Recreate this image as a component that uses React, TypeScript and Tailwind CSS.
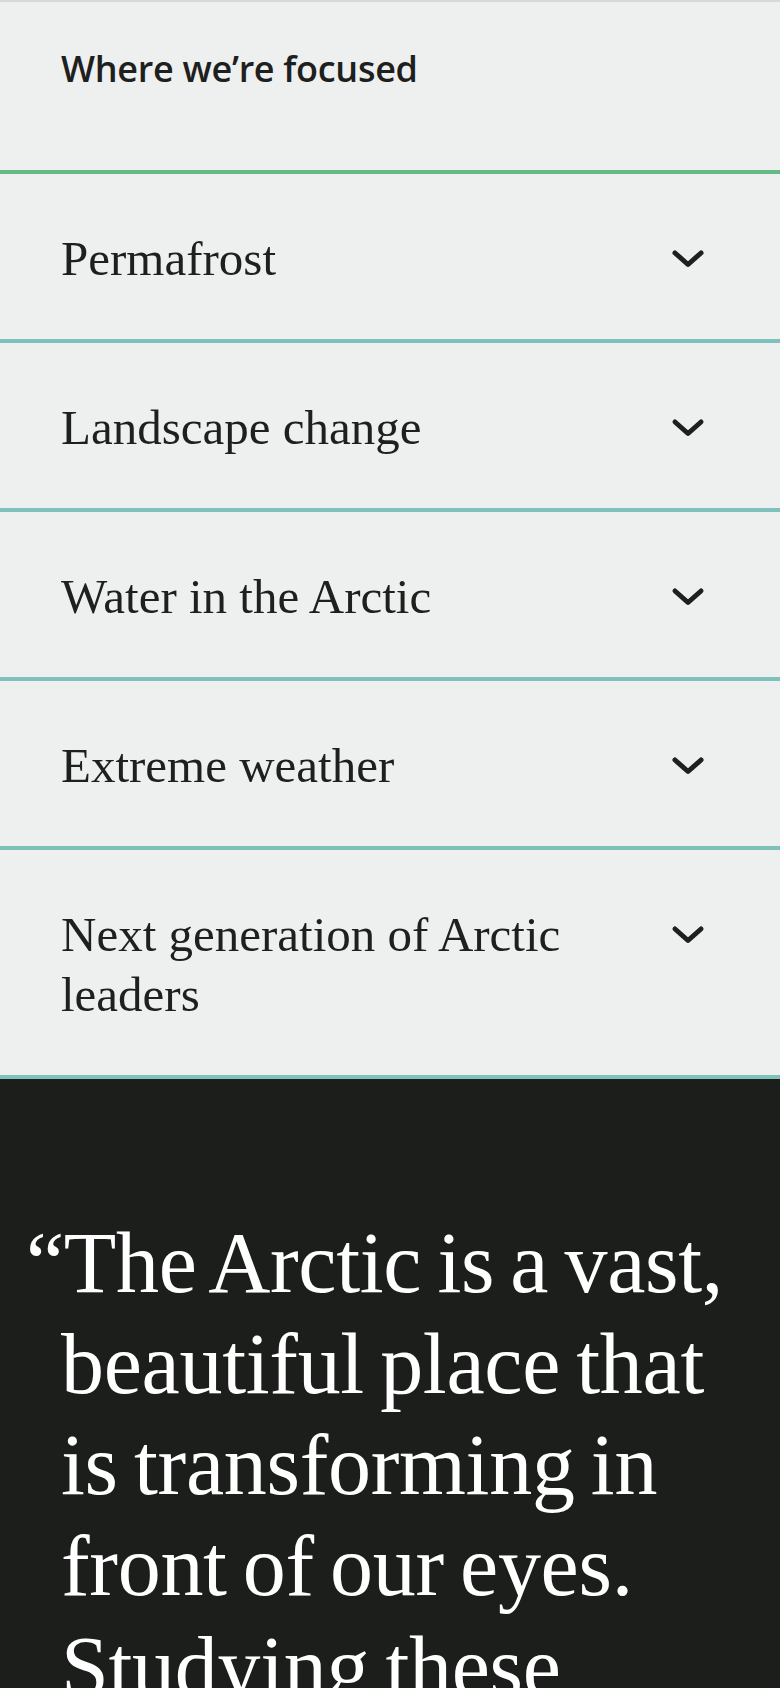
import React from 'react';

const topics = [
  'Permafrost',
  'Landscape change',
  'Water in the Arctic',
  'Extreme weather',
  'Next generation of Arctic leaders',
];

const Chevron: React.FC = () => (
  <svg width="34" height="20" viewBox="0 0 34 20" fill="none" className="block">
    <path d="M4 4 L17 15.5 L30 4" stroke="#1e201e" strokeWidth="5" strokeLinecap="round" strokeLinejoin="round" />
  </svg>
);

const App: React.FC = () => {
  return (
    <div className="w-[780px] min-h-[1688px] bg-[#1b1e1b] overflow-hidden">
      {/* Focus list */}
      <div className="bg-[#eef0ef] border-t-2 border-[#d6d9d7]">
        <div className="h-[168px] pl-[61px] pt-[45px]">
          <h2 className="text-[36px] leading-[44px] font-semibold text-[#1e201e] tracking-[-0.3px]" style={{ fontFamily: '"Open Sans", "Noto Sans", sans-serif' }}>
            Where we’re focused
          </h2>
        </div>
        <div className="h-[4px] bg-[#66b985]"></div>
        {topics.map((t) => (
          <div key={t} className="flex items-start gap-6 pl-[61px] pr-[75px] pt-[55px] pb-[50px] border-b-4 border-[#7fc0bb]">
            <div className="flex-1 text-[49px] leading-[60px] text-[#1e201e]" style={{ fontFamily: '"Liberation Serif", serif' }}>
              {t}
            </div>
            <div className="h-[60px] flex items-center">
              <Chevron />
            </div>
          </div>
        ))}
      </div>

      {/* Quote */}
      <div className="bg-[#1b1e1b] pl-[61px] pr-[20px] pt-[134px] pb-[80px]">
        <blockquote className="text-[86px] leading-[101px] text-white -indent-[35px] tracking-[-0.3px] [word-spacing:-5px]" style={{ fontFamily: '"Liberation Serif", serif' }}>
          “The Arctic is a vast, beautiful place that is transforming in front of our eyes. Studying these changes is critical to understanding our planet’s future.”
        </blockquote>
      </div>
    </div>
  );
};

export default App;
